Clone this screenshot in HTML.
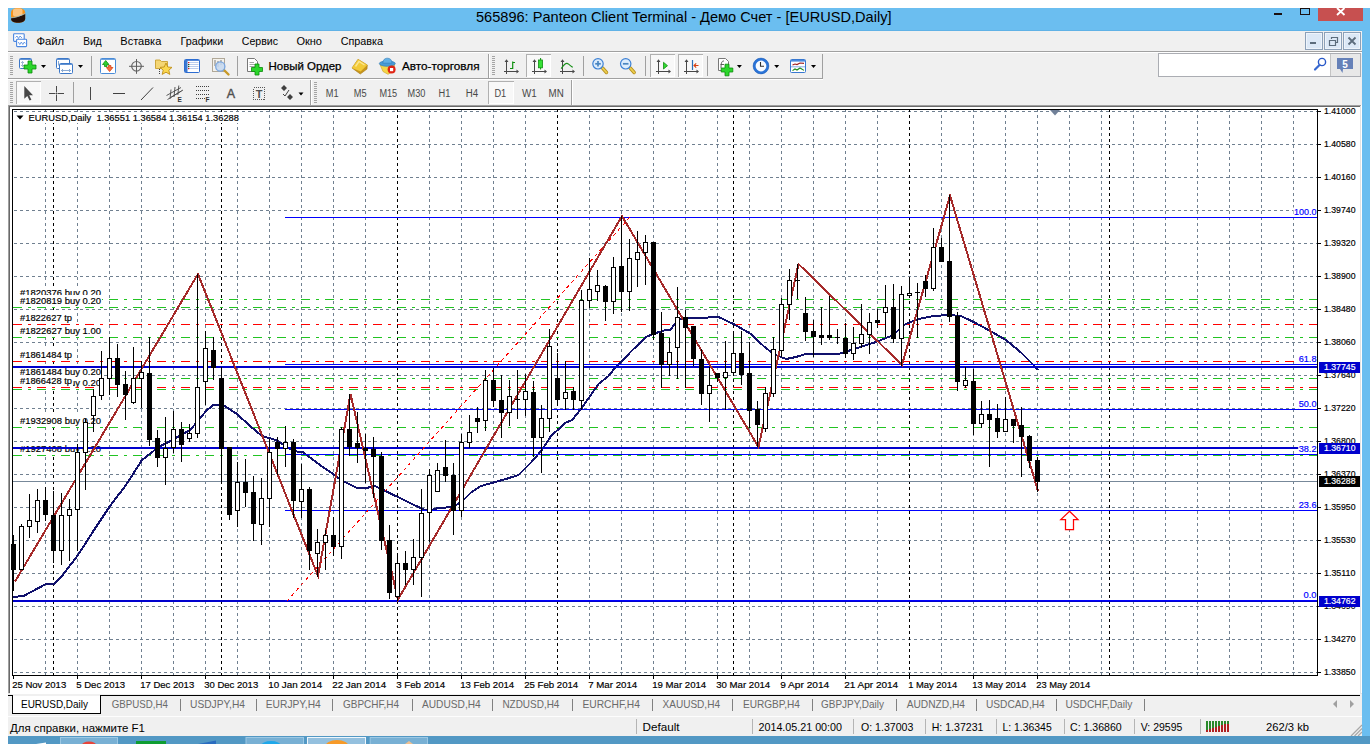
<!DOCTYPE html>
<html lang="ru"><head><meta charset="utf-8"><title>565896: Panteon Client Terminal - Демо Счет - [EURUSD,Daily]</title>
<style>
html,body{margin:0;padding:0;background:#fff;}
body{width:1370px;height:744px;overflow:hidden;position:relative;}
svg{position:absolute;left:0;top:0;display:block;font-family:"Liberation Sans", sans-serif;}
text{white-space:pre;}
</style></head><body>
<svg width="1370" height="744" viewBox="0 0 1370 744">
<rect x="8" y="8" width="1362" height="728" fill="#6bbef0"/>
<rect x="8" y="31" width="1354" height="705" fill="#f0f0f0"/>
<clipPath id="ic"><path d="M11,13 C11,9.5 13.5,8 18,8 C22.5,8 25.2,9.5 25.2,13 V18.5 C25.2,21.5 22,22.7 18,22.7 C14,22.7 11,21.5 11,18.5 Z"/></clipPath>
<g clip-path="url(#ic)"><rect x="10" y="7" width="16" height="16" fill="#f6931c"/><rect x="13" y="8.5" width="9.5" height="8" rx="2" fill="#fdd4a0" opacity="0.75"/><path d="M10,18.3 C15,18.3 20,16.5 26,13.5 V24 H10 Z" fill="#24110a"/><path d="M10,17.9 C15,17.9 20,16.1 26,13.1" stroke="#7cc4ec" stroke-width="0.7" fill="none"/></g>
<rect x="8" y="30" width="1354" height="1" fill="#60b2e6"/>
<text x="476" y="21.6" font-size="15" fill="#000" textLength="415.5" lengthAdjust="spacingAndGlyphs" >565896: Panteon Client Terminal - Демо Счет - [EURUSD,Daily]</text>
<rect x="1274" y="13" width="8" height="2" fill="#1a1010"/>
<rect x="1300.5" y="8.5" width="9" height="6" fill="none" stroke="#1a1010" stroke-width="1"/>
<rect x="1318" y="8" width="45" height="13" fill="#c75050"/>
<path d="M1337,8 L1344.5,15 M1344.5,8 L1337,15" stroke="#fff" stroke-width="1.8" fill="none"/>
<rect x="13.6" y="33.8" width="10.6" height="7.6" rx="0.8" fill="#fff" stroke="#4a86e0" stroke-width="1.1"/><path d="M15.5,37.5 L17,36 L18.5,38.5 L20,36 L22,38" stroke="#4a86e0" fill="none" stroke-width="0.8"/><rect x="16.6" y="39.2" width="10" height="7.4" rx="0.8" fill="#fff" stroke="#4a86e0" stroke-width="1.1"/><path d="M18.3,42 L19.8,44.5 L21.3,42 L22.8,44.5 L24.3,42 L25.3,43.5" stroke="#4a86e0" fill="none" stroke-width="0.8"/>
<text x="36.5" y="44.5" font-size="11" fill="#000" textLength="27.7" lengthAdjust="spacingAndGlyphs" >Файл</text>
<text x="83.2" y="44.5" font-size="11" fill="#000" textLength="18.4" lengthAdjust="spacingAndGlyphs" >Вид</text>
<text x="120.3" y="44.5" font-size="11" fill="#000" textLength="41" lengthAdjust="spacingAndGlyphs" >Вставка</text>
<text x="180.4" y="44.5" font-size="11" fill="#000" textLength="43" lengthAdjust="spacingAndGlyphs" >Графики</text>
<text x="241.8" y="44.5" font-size="11" fill="#000" textLength="36.2" lengthAdjust="spacingAndGlyphs" >Сервис</text>
<text x="296.4" y="44.5" font-size="11" fill="#000" textLength="25.6" lengthAdjust="spacingAndGlyphs" >Окно</text>
<text x="340.7" y="44.5" font-size="11" fill="#000" textLength="42.3" lengthAdjust="spacingAndGlyphs" >Справка</text>
<rect x="1305.5" y="32.5" width="17" height="17" fill="#dce8f6" stroke="#8ca0b8"/>
<rect x="1306.5" y="33.5" width="15" height="15" fill="none" stroke="#eef4fb"/>
<rect x="1324.5" y="32.5" width="17" height="17" fill="#dce8f6" stroke="#8ca0b8"/>
<rect x="1325.5" y="33.5" width="15" height="15" fill="none" stroke="#eef4fb"/>
<rect x="1343.5" y="32.5" width="17" height="17" fill="#dce8f6" stroke="#8ca0b8"/>
<rect x="1344.5" y="33.5" width="15" height="15" fill="none" stroke="#eef4fb"/>
<rect x="1310" y="42" width="6" height="2" fill="#5c6c7c"/>
<path d="M1331.5,39 V37.5 H1337.5 V42.5 H1336 M1329.5,40.5 H1335.5 V45.5 H1329.5 Z" fill="none" stroke="#5c6c7c" stroke-width="1.2"/>
<path d="M1348.5,37.5 L1355.5,44.5 M1355.5,37.5 L1348.5,44.5" stroke="#5c6c7c" stroke-width="1.8"/>
<rect x="8" y="51" width="1354" height="1" fill="#a0a0a0"/>
<rect x="8" y="52" width="1354" height="1" fill="#fff"/>
<rect x="8" y="78" width="815" height="1" fill="#a0a0a0"/>
<rect x="8" y="79" width="815" height="1" fill="#fff"/>
<rect x="488" y="54" width="1" height="24" fill="#a0a0a0"/>
<rect x="489" y="54" width="1" height="24" fill="#fff"/>
<rect x="822" y="54" width="1" height="25" fill="#a0a0a0"/>
<rect x="10" y="56" width="3" height="1" fill="#a4a4a4"/><rect x="10" y="58" width="3" height="1" fill="#a4a4a4"/><rect x="10" y="60" width="3" height="1" fill="#a4a4a4"/><rect x="10" y="62" width="3" height="1" fill="#a4a4a4"/><rect x="10" y="64" width="3" height="1" fill="#a4a4a4"/><rect x="10" y="66" width="3" height="1" fill="#a4a4a4"/><rect x="10" y="68" width="3" height="1" fill="#a4a4a4"/><rect x="10" y="70" width="3" height="1" fill="#a4a4a4"/><rect x="10" y="72" width="3" height="1" fill="#a4a4a4"/><rect x="10" y="74" width="3" height="1" fill="#a4a4a4"/>
<rect x="492" y="56" width="3" height="1" fill="#a4a4a4"/><rect x="492" y="58" width="3" height="1" fill="#a4a4a4"/><rect x="492" y="60" width="3" height="1" fill="#a4a4a4"/><rect x="492" y="62" width="3" height="1" fill="#a4a4a4"/><rect x="492" y="64" width="3" height="1" fill="#a4a4a4"/><rect x="492" y="66" width="3" height="1" fill="#a4a4a4"/><rect x="492" y="68" width="3" height="1" fill="#a4a4a4"/><rect x="492" y="70" width="3" height="1" fill="#a4a4a4"/><rect x="492" y="72" width="3" height="1" fill="#a4a4a4"/><rect x="492" y="74" width="3" height="1" fill="#a4a4a4"/>
<rect x="19.5" y="58.5" width="12" height="10" rx="1" fill="#fff" stroke="#3c78c8"/><rect x="20" y="59" width="11" height="1" fill="#3c78c8" opacity="0.8"/>
<path d="M22.5,61.5 V66.5 M21,63 L22.5,61.5 L24,63 M21,65 L22.5,66.5 L24,65" stroke="#88a4c8" fill="none" stroke-width="0.8"/>
<path d="M28,61 H32 V65 H36 V69 H32 V73 H28 V69 H24 V65 H28 Z" fill="#2bd62b" stroke="#0a8a0a" stroke-width="0.8"/>
<path d="M41.0,65 L46.0,65 L43.5,68 Z" fill="#000"/>
<rect x="56.5" y="58.5" width="13" height="10" rx="1" fill="#fff" stroke="#3c78c8"/><rect x="57" y="59" width="12" height="1" fill="#3c78c8" opacity="0.8"/>
<path d="M58.5,61 V65 M58.5,65.5 H67 M65,64 L67,65.5 L65,67" stroke="#6c94c8" fill="none" stroke-width="0.8"/>
<rect x="59.5" y="63.5" width="13" height="10" rx="1" fill="#fff" stroke="#3c78c8"/><rect x="60" y="64" width="12" height="1" fill="#3c78c8" opacity="0.8"/>
<path d="M61.5,70.5 H70.5 M63,69 L61.5,70.5 L63,72 M69,69 L70.5,70.5 L69,72" stroke="#6c94c8" fill="none" stroke-width="0.8"/>
<path d="M78.0,65 L83.0,65 L80.5,68 Z" fill="#000"/>
<rect x="91" y="56" width="1" height="20" fill="#a0a0a0"/>
<rect x="100.5" y="58.5" width="15" height="15" rx="1" fill="#fff" stroke="#4a8cd8"/><rect x="101" y="59" width="14" height="1" fill="#4a8cd8" opacity="0.8"/>
<path d="M104.5,66.5 V64.5 H102.5 L105.7,60.5 L109,64.5 H107 V66.5 Z" stroke="#109010" fill="#30d030" stroke-width="0.8"/>
<path d="M108.4,65.5 V67.5 H106.4 L109.6,71.5 L112.9,67.5 H110.9 V65.5 Z" stroke="#d84010" fill="#f87040" stroke-width="0.8"/>
<circle cx="136.5" cy="66.3" r="4.8" fill="none" stroke="#686868" stroke-width="1.2"/><path d="M136.5,59 V73.8 M129,66.3 H144" stroke="#606060" stroke-width="1"/>
<path d="M155.5,60 H160 L161.5,61.5 H167.5 V68.5 H155.5 Z" fill="#f4d674" stroke="#c8a030" stroke-width="0.9"/>
<path d="M166,63 L167.8,67 L172,67.4 L168.8,70.2 L169.8,74.4 L166,72.2 L162.2,74.4 L163.2,70.2 L160,67.4 L164.2,67 Z" fill="#fbd850" stroke="#c09018" stroke-width="0.9"/>
<path d="M159.5,69 V74" stroke="#404040" stroke-dasharray="1 1"/>
<rect x="184.5" y="59.5" width="15" height="13" rx="1" fill="#fff" stroke="#2c6cd0"/><rect x="185" y="60" width="14" height="1" fill="#2c6cd0" opacity="0.8"/>
<rect x="185" y="60" width="2.5" height="12" fill="#3c78d0"/>
<path d="M189,62.5 H198.5 M189,64.5 H198.5 M189,66.5 H198.5 M189,68.5 H198.5" stroke="#a8c0e8" stroke-width="0.8"/>
<rect x="188" y="62" width="1.3" height="1.2" fill="#e02020"/><rect x="188" y="64" width="1.3" height="1.2" fill="#205020"/><rect x="188" y="66" width="1.3" height="1.2" fill="#205020"/><rect x="188" y="68" width="1.3" height="1.2" fill="#e02020"/>
<rect x="212.5" y="58.5" width="12" height="13" fill="#f4f2ec" stroke="#b0a898"/>
<path d="M215,60 V66 M218,61 V67 M221,60 V65" stroke="#707070" stroke-width="0.9"/>
<path d="M224,70 L228.5,74.5" stroke="#c89a28" stroke-width="2.4" stroke-linecap="round"/>
<circle cx="220.3" cy="66.5" r="4.6" fill="#c4d8f0" fill-opacity="0.85" stroke="#7aa6e0" stroke-width="1.3"/>
<rect x="237" y="56" width="1" height="20" fill="#a0a0a0"/>
<path d="M247.5,58.5 H254.5 L257.5,61.5 V71.5 H247.5 Z" fill="#fff" stroke="#787878"/>
<path d="M249.5,62.5 H254 M249.5,64.5 H255.5 M249.5,66.5 H255.5" stroke="#909090" stroke-width="0.8"/>
<path d="M255,64.0 H259 V67.5 H262.5 V71.5 H259 V75.0 H255 V71.5 H251.5 V67.5 H255 Z" fill="#2bd62b" stroke="#0a8a0a" stroke-width="0.8"/>
<text x="268.5" y="69.5" font-size="11" fill="#000" textLength="73" lengthAdjust="spacingAndGlyphs" stroke="#000" stroke-width="0.25">Новый Ордер</text>
<path d="M352,68 L358,59.3 L367.3,65 L367,69 L360.3,74 Z" fill="#c8961c" stroke="#a87810" stroke-width="0.6"/>
<path d="M352,68 L358,59.3 L367.3,65 L360.6,71.6 Z" fill="#f2ca38"/>
<path d="M355.5,66.5 L359,61.5 L364.5,65" fill="none" stroke="#fbe690" stroke-width="1.4"/>
<path d="M380,64.5 L394.5,64.5 L394,71 L388,74.3 L383,71.5 Z" fill="#f4d648" stroke="#d0a830" stroke-width="0.7"/>
<ellipse cx="387.3" cy="63.6" rx="8" ry="2.7" fill="#4a9cd6" stroke="#2f7ab8" stroke-width="0.7"/>
<path d="M382.8,63.2 C383,59.5 385,58.2 387.5,58.2 C390,58.2 392,59.8 392,63.2 Z" fill="#62b0e4" stroke="#2f7ab8" stroke-width="0.6"/>
<circle cx="391.6" cy="69.6" r="4" fill="#e02414"/><rect x="390" y="68" width="3.2" height="3.2" fill="#fff"/>
<text x="402" y="69.5" font-size="11" fill="#000" textLength="77.5" lengthAdjust="spacingAndGlyphs" stroke="#000" stroke-width="0.25">Авто-торговля</text>
<path d="M506.5,60.5 V74 M504,71.5 H517.5" stroke="#484848" fill="none" stroke-width="1"/><path d="M504.5,62 L506.5,59.3 L508.5,62 Z M516.5,69.5 L519,71.5 L516.5,73.5 Z" fill="#484848"/>
<path d="M512.7,69 V61.5 M510,68.5 H512.7 M512.7,62.5 H515" stroke="#109010" stroke-width="1.2" fill="none"/>
<rect x="526" y="54" width="25" height="23" fill="#f8f8f8"/><rect x="526" y="76" width="25" height="1" fill="#fff"/><rect x="550" y="54" width="1" height="23" fill="#fff"/><rect x="526" y="54" width="25" height="1" fill="#b0b0b0"/><rect x="526" y="54" width="1" height="23" fill="#b0b0b0"/>
<path d="M534.5,60.5 V74 M532,71.5 H545.5" stroke="#484848" fill="none" stroke-width="1"/><path d="M532.5,62 L534.5,59.3 L536.5,62 Z M544.5,69.5 L547,71.5 L544.5,73.5 Z" fill="#484848"/>
<path d="M540.6,58 V69.5" stroke="#109010" stroke-width="1"/><rect x="538.6" y="60" width="4" height="7.8" fill="#34e034" stroke="#109010" stroke-width="0.8"/>
<path d="M562.5,60.5 V74 M560,71.5 H573.5" stroke="#484848" fill="none" stroke-width="1"/><path d="M560.5,62 L562.5,59.3 L564.5,62 Z M572.5,69.5 L575,71.5 L572.5,73.5 Z" fill="#484848"/>
<path d="M561.2,68.6 C563,66 565,63.2 567,63.4 C569,63.8 571,66.5 572.8,67.3" stroke="#189018" stroke-width="1.1" fill="none"/>
<rect x="583" y="56" width="1" height="20" fill="#a0a0a0"/>
<path d="M602.5,68 L606.5,72.5" stroke="#b89020" stroke-width="3.4" stroke-linecap="round"/><path d="M602.5,68 L606.5,72.5" stroke="#ecd050" stroke-width="1.8" stroke-linecap="round"/><circle cx="598" cy="63.8" r="5.2" fill="#dcecfc" stroke="#3c80d4" stroke-width="1.2"/><path d="M595.2,63.8 H600.8" stroke="#4a86c0" stroke-width="1.7"/><path d="M598,61 V66.6" stroke="#4a86c0" stroke-width="1.7"/>
<path d="M630.2,68 L634.2,72.5" stroke="#b89020" stroke-width="3.4" stroke-linecap="round"/><path d="M630.2,68 L634.2,72.5" stroke="#ecd050" stroke-width="1.8" stroke-linecap="round"/><circle cx="625.7" cy="63.8" r="5.2" fill="#dcecfc" stroke="#3c80d4" stroke-width="1.2"/><path d="M622.9000000000001,63.8 H628.5" stroke="#4a86c0" stroke-width="1.7"/>
<rect x="645" y="56" width="1" height="20" fill="#a0a0a0"/>
<rect x="650" y="54" width="25" height="23" fill="#f8f8f8"/><rect x="650" y="76" width="25" height="1" fill="#fff"/><rect x="674" y="54" width="1" height="23" fill="#fff"/><rect x="650" y="54" width="25" height="1" fill="#b0b0b0"/><rect x="650" y="54" width="1" height="23" fill="#b0b0b0"/>
<path d="M658.5,60.5 V74 M656,71.5 H669.5" stroke="#484848" fill="none" stroke-width="1"/><path d="M656.5,62 L658.5,59.3 L660.5,62 Z M668.5,69.5 L671,71.5 L668.5,73.5 Z" fill="#484848"/>
<path d="M663.5,62.3 L667.5,65.7 L663.5,69 Z" fill="#30d830" stroke="#109010" stroke-width="0.8"/>
<rect x="678" y="54" width="25" height="23" fill="#f8f8f8"/><rect x="678" y="76" width="25" height="1" fill="#fff"/><rect x="702" y="54" width="1" height="23" fill="#fff"/><rect x="678" y="54" width="25" height="1" fill="#b0b0b0"/><rect x="678" y="54" width="1" height="23" fill="#b0b0b0"/>
<path d="M686.5,60.5 V74 M684,71.5 H697.5" stroke="#484848" fill="none" stroke-width="1"/><path d="M684.5,62 L686.5,59.3 L688.5,62 Z M696.5,69.5 L699,71.5 L696.5,73.5 Z" fill="#484848"/>
<path d="M692.5,60 V70" stroke="#2a70b8" stroke-width="1.2"/><path d="M698.5,65.5 H694 M696.2,63.3 L694,65.5 L696.2,67.7" stroke="#d84010" stroke-width="1.1" fill="none"/>
<rect x="707" y="56" width="1" height="20" fill="#a0a0a0"/>
<path d="M718.5,58.5 H725.5 L728.5,61.5 V70.5 H718.5 Z" fill="#fff" stroke="#787878"/>
<path d="M721,68 C721,62 722,61 724,61 M720.5,64.5 H724" stroke="#505050" stroke-width="0.9" fill="none"/>
<path d="M725,64.2 H729 V68 H732.8 V72 H729 V75.8 H725 V72 H721.2 V68 H725 Z" fill="#2bd62b" stroke="#0a8a0a" stroke-width="0.8"/>
<path d="M736.9,65 L741.9,65 L739.4,68 Z" fill="#000"/>
<circle cx="761" cy="66" r="6.7" fill="#f8fbff" stroke="#2a74d8" stroke-width="2.6"/><circle cx="761" cy="66" r="7.9" fill="none" stroke="#1c58b0" stroke-width="0.5"/><path d="M760.5,62 V66.3 H764" stroke="#303030" stroke-width="1.1" fill="none"/>
<path d="M774.2,65 L779.2,65 L776.7,68 Z" fill="#000"/>
<rect x="790.5" y="59.5" width="15" height="13" rx="1" fill="#fff" stroke="#3878d0"/><rect x="791" y="60" width="14" height="1" fill="#3878d0" opacity="0.8"/>
<rect x="791" y="60" width="14" height="1.6" fill="#4a8ce0"/>
<path d="M792.5,65 L795,64 L797,64.6 L800,63 L804,63.4" stroke="#a02020" fill="none" stroke-width="1.1"/>
<path d="M792.5,70.6 L795,69 L797,70 L800,68 L804,70.4" stroke="#1a8a1a" fill="none" stroke-width="1.1"/>
<path d="M791,66.8 H805" stroke="#6898dc" stroke-width="0.8"/>
<path d="M811.0,65 L816.0,65 L813.5,68 Z" fill="#000"/>
<rect x="1158.5" y="53.5" width="202" height="23" fill="#fff" stroke="#abadb3"/>
<rect x="1331" y="54" width="29" height="22" fill="#e8e8e8"/>
<rect x="1330" y="54" width="1" height="22" fill="#c4c4c4"/>
<circle cx="1322" cy="62" r="3.6" fill="#fff" stroke="#2858c8" stroke-width="1.4"/><path d="M1319.5,65 L1315,69.5" stroke="#3868d0" stroke-width="2.2" stroke-linecap="round"/>
<path d="M1337,58 H1353 V69 H1343 L1342.5,73 L1340,69 H1337 Z" fill="#6681b8"/>
<text x="1345" y="67.5" font-size="10" fill="#fff" text-anchor="middle" font-weight="bold" >5</text>
<rect x="310" y="80" width="1" height="25" fill="#a0a0a0"/>
<rect x="311" y="80" width="1" height="25" fill="#fff"/>
<rect x="571" y="80" width="1" height="25" fill="#a0a0a0"/>
<rect x="572" y="80" width="1" height="25" fill="#fff"/>
<rect x="10" y="82" width="3" height="1" fill="#a4a4a4"/><rect x="10" y="84" width="3" height="1" fill="#a4a4a4"/><rect x="10" y="86" width="3" height="1" fill="#a4a4a4"/><rect x="10" y="88" width="3" height="1" fill="#a4a4a4"/><rect x="10" y="90" width="3" height="1" fill="#a4a4a4"/><rect x="10" y="92" width="3" height="1" fill="#a4a4a4"/><rect x="10" y="94" width="3" height="1" fill="#a4a4a4"/><rect x="10" y="96" width="3" height="1" fill="#a4a4a4"/><rect x="10" y="98" width="3" height="1" fill="#a4a4a4"/><rect x="10" y="100" width="3" height="1" fill="#a4a4a4"/><rect x="10" y="102" width="3" height="1" fill="#a4a4a4"/>
<rect x="314" y="82" width="3" height="1" fill="#a4a4a4"/><rect x="314" y="84" width="3" height="1" fill="#a4a4a4"/><rect x="314" y="86" width="3" height="1" fill="#a4a4a4"/><rect x="314" y="88" width="3" height="1" fill="#a4a4a4"/><rect x="314" y="90" width="3" height="1" fill="#a4a4a4"/><rect x="314" y="92" width="3" height="1" fill="#a4a4a4"/><rect x="314" y="94" width="3" height="1" fill="#a4a4a4"/><rect x="314" y="96" width="3" height="1" fill="#a4a4a4"/><rect x="314" y="98" width="3" height="1" fill="#a4a4a4"/><rect x="314" y="100" width="3" height="1" fill="#a4a4a4"/><rect x="314" y="102" width="3" height="1" fill="#a4a4a4"/>
<rect x="16" y="81" width="25" height="23" fill="#f8f8f8"/><rect x="16" y="103" width="25" height="1" fill="#fff"/><rect x="40" y="81" width="1" height="23" fill="#fff"/><rect x="16" y="81" width="25" height="1" fill="#b0b0b0"/><rect x="16" y="81" width="1" height="23" fill="#b0b0b0"/>
<path d="M24.3,86 V98.8 L27.3,96 L29.6,100.6 L31.4,99.7 L29.2,95.3 H33 Z" fill="#484848"/>
<path d="M56.5,86 V101 M49,93.5 H64" stroke="#484848" stroke-width="1"/><rect x="55.5" y="92.5" width="2" height="2" fill="#f0f0f0"/><rect x="56" y="93" width="1" height="1" fill="#484848"/>
<rect x="73" y="82" width="1" height="21" fill="#a0a0a0"/>
<path d="M90.5,87 V100" stroke="#484848" stroke-width="1"/>
<path d="M113,93.5 H125" stroke="#404040" stroke-width="1"/>
<path d="M141,100 L153,87.5" stroke="#404040" stroke-width="1"/>
<path d="M166.5,95.5 L181,87.5 M167.5,99.5 L181.5,91 M170.5,97.5 L183,90 M171,89.5 L170,99 M175,87 L174,97 M178.8,85.5 L177.8,95" stroke="#484848" stroke-width="0.9"/>
<text x="177.5" y="102" font-size="6.5" fill="#303030" font-weight="bold" >E</text>
<path d="M196,86.5 H209 M196,90.5 H209 M196,94.5 H209 M196,98.5 H205" stroke="#404040" stroke-width="1" stroke-dasharray="1 1"/>
<text x="205.5" y="102" font-size="6.5" fill="#303030" font-weight="bold" >F</text>
<text x="230.8" y="98" font-size="12.5" fill="#505050" text-anchor="middle" stroke="#505050" stroke-width="0.4">A</text>
<rect x="253.5" y="87.5" width="11" height="12" fill="none" stroke="#585858" stroke-dasharray="1 1" shape-rendering="crispEdges"/>
<text x="259" y="97.8" font-size="11" fill="#505050" text-anchor="middle" font-weight="bold" >T</text>
<path d="M281,88 L284,85 L287,88 L284,91 Z M287,97 L290,94 L293,97 L290,100 Z" fill="#404040"/><path d="M283,94 L285,96 L289,90" stroke="#404040" fill="none" stroke-width="1"/>
<path d="M298.5,92.5 L303.5,92.5 L301,95.5 Z" fill="#000"/>
<rect x="488" y="81" width="26" height="23" fill="#f8f8f8"/><rect x="488" y="103" width="26" height="1" fill="#fff"/><rect x="513" y="81" width="1" height="23" fill="#fff"/><rect x="488" y="81" width="26" height="1" fill="#b0b0b0"/><rect x="488" y="81" width="1" height="23" fill="#b0b0b0"/>
<text x="325.8" y="96.8" font-size="10" fill="#484848" textLength="12.8" lengthAdjust="spacingAndGlyphs" >M1</text>
<text x="353.8" y="96.8" font-size="10" fill="#484848" textLength="12.8" lengthAdjust="spacingAndGlyphs" >M5</text>
<text x="379.40000000000003" y="96.8" font-size="10" fill="#484848" textLength="17.8" lengthAdjust="spacingAndGlyphs" >M15</text>
<text x="407.6" y="96.8" font-size="10" fill="#484848" textLength="17.8" lengthAdjust="spacingAndGlyphs" >M30</text>
<text x="438.6" y="96.8" font-size="10" fill="#484848" textLength="11.8" lengthAdjust="spacingAndGlyphs" >H1</text>
<text x="465.8" y="96.8" font-size="10" fill="#484848" textLength="12.4" lengthAdjust="spacingAndGlyphs" >H4</text>
<text x="494.40000000000003" y="96.8" font-size="10" fill="#484848" textLength="11.8" lengthAdjust="spacingAndGlyphs" >D1</text>
<text x="522.0" y="96.8" font-size="10" fill="#484848" textLength="14.8" lengthAdjust="spacingAndGlyphs" >W1</text>
<text x="548.6" y="96.8" font-size="10" fill="#484848" textLength="15.2" lengthAdjust="spacingAndGlyphs" >MN</text>
<rect x="8" y="105" width="1354" height="1" fill="#a0a0a0"/>
<rect x="9" y="106" width="1352" height="1" fill="#696969"/>
<rect x="8" y="105" width="1" height="588" fill="#a0a0a0"/>
<rect x="8" y="695" width="1" height="20" fill="#a0a0a0"/>
<rect x="9" y="106" width="1" height="587" fill="#696969"/>
<rect x="9" y="695" width="1" height="20" fill="#696969"/>
<rect x="1360" y="106" width="1" height="609" fill="#e3e3e3"/>
<rect x="1361" y="105" width="1" height="611" fill="#fff"/>
<rect x="8" y="693" width="1354" height="22" fill="#f0f0f0"/>
<rect x="8" y="693" width="1354" height="1" fill="#e3e3e3"/>
<rect x="8" y="695" width="5" height="1" fill="#000"/>
<rect x="100" y="695" width="1260" height="1" fill="#000"/>
<rect x="12" y="696" width="89" height="18" fill="#fff"/>
<rect x="12" y="695" width="1" height="19" fill="#000"/>
<rect x="100" y="695" width="1" height="19" fill="#000"/>
<rect x="12" y="713" width="89" height="1" fill="#000"/>
<text x="21" y="708" font-size="11" fill="#000" textLength="67" lengthAdjust="spacingAndGlyphs" >EURUSD,Daily</text>
<text x="111.7" y="708" font-size="11" fill="#6a6a6a" textLength="56.1" lengthAdjust="spacingAndGlyphs" >GBPUSD,H4</text>
<rect x="180" y="699" width="1" height="12" fill="#808080"/>
<text x="190" y="708" font-size="11" fill="#6a6a6a" textLength="55" lengthAdjust="spacingAndGlyphs" >USDJPY,H4</text>
<rect x="256" y="699" width="1" height="12" fill="#808080"/>
<text x="265.8" y="708" font-size="11" fill="#6a6a6a" textLength="55.0" lengthAdjust="spacingAndGlyphs" >EURJPY,H4</text>
<rect x="332" y="699" width="1" height="12" fill="#808080"/>
<text x="343" y="708" font-size="11" fill="#6a6a6a" textLength="56" lengthAdjust="spacingAndGlyphs" >GBPCHF,H4</text>
<rect x="412" y="699" width="1" height="12" fill="#808080"/>
<text x="422" y="708" font-size="11" fill="#6a6a6a" textLength="58.7" lengthAdjust="spacingAndGlyphs" >AUDUSD,H4</text>
<rect x="492" y="699" width="1" height="12" fill="#808080"/>
<text x="502.4" y="708" font-size="11" fill="#6a6a6a" textLength="57.0" lengthAdjust="spacingAndGlyphs" >NZDUSD,H4</text>
<rect x="572" y="699" width="1" height="12" fill="#808080"/>
<text x="582.4" y="708" font-size="11" fill="#6a6a6a" textLength="57.6" lengthAdjust="spacingAndGlyphs" >EURCHF,H4</text>
<rect x="652" y="699" width="1" height="12" fill="#808080"/>
<text x="662.5" y="708" font-size="11" fill="#6a6a6a" textLength="57.5" lengthAdjust="spacingAndGlyphs" >XAUUSD,H4</text>
<rect x="732" y="699" width="1" height="12" fill="#808080"/>
<text x="742.9" y="708" font-size="11" fill="#6a6a6a" textLength="57.1" lengthAdjust="spacingAndGlyphs" >EURGBP,H4</text>
<rect x="812" y="699" width="1" height="12" fill="#808080"/>
<text x="821" y="708" font-size="11" fill="#6a6a6a" textLength="63" lengthAdjust="spacingAndGlyphs" >GBPJPY,Daily</text>
<rect x="896" y="699" width="1" height="12" fill="#808080"/>
<text x="906.7" y="708" font-size="11" fill="#6a6a6a" textLength="58.3" lengthAdjust="spacingAndGlyphs" >AUDNZD,H4</text>
<rect x="976" y="699" width="1" height="12" fill="#808080"/>
<text x="986" y="708" font-size="11" fill="#6a6a6a" textLength="58.7" lengthAdjust="spacingAndGlyphs" >USDCAD,H4</text>
<rect x="1056" y="699" width="1" height="12" fill="#808080"/>
<text x="1065.4" y="708" font-size="11" fill="#6a6a6a" textLength="67.0" lengthAdjust="spacingAndGlyphs" >USDCHF,Daily</text>
<rect x="1144" y="699" width="1" height="12" fill="#808080"/>
<path d="M1337,700 V708 L1333,704 Z M1350,700 V708 L1354,704 Z" fill="#a0a0a0"/>
<rect x="8" y="715" width="1354" height="1" fill="#f0f0f0"/>
<rect x="8" y="716" width="1354" height="1" fill="#fdfdfd"/>
<text x="10" y="731.5" font-size="11.5" fill="#000" textLength="135" lengthAdjust="spacingAndGlyphs" >Для справки, нажмите F1</text>
<text x="642.5" y="730.5" font-size="11" fill="#000" textLength="37" lengthAdjust="spacingAndGlyphs" >Default</text>
<text x="758.5" y="730.5" font-size="11" fill="#000" textLength="83.5" lengthAdjust="spacingAndGlyphs" >2014.05.21 00:00</text>
<text x="861" y="730.5" font-size="11" fill="#000" textLength="52.3" lengthAdjust="spacingAndGlyphs" >O: 1.37003</text>
<text x="931.7" y="730.5" font-size="11" fill="#000" textLength="51.7" lengthAdjust="spacingAndGlyphs" >H: 1.37231</text>
<text x="1002.4" y="730.5" font-size="11" fill="#000" textLength="49.3" lengthAdjust="spacingAndGlyphs" >L: 1.36345</text>
<text x="1070" y="730.5" font-size="11" fill="#000" textLength="51.7" lengthAdjust="spacingAndGlyphs" >C: 1.36860</text>
<text x="1140.7" y="730.5" font-size="11" fill="#000" textLength="41.7" lengthAdjust="spacingAndGlyphs" >V: 29595</text>
<text x="1266" y="730.5" font-size="11" fill="#000" textLength="43" lengthAdjust="spacingAndGlyphs" >262/3 kb</text>
<rect x="636" y="719" width="1" height="15" fill="#b4b4b4"/>
<rect x="752" y="719" width="1" height="15" fill="#b4b4b4"/>
<rect x="853" y="719" width="1" height="15" fill="#b4b4b4"/>
<rect x="925" y="719" width="1" height="15" fill="#b4b4b4"/>
<rect x="996" y="719" width="1" height="15" fill="#b4b4b4"/>
<rect x="1064" y="719" width="1" height="15" fill="#b4b4b4"/>
<rect x="1134" y="719" width="1" height="15" fill="#b4b4b4"/>
<rect x="1200" y="719" width="1" height="15" fill="#b4b4b4"/>
<rect x="1206" y="721" width="2" height="9" fill="#2a8a2a"/>
<rect x="1206" y="730" width="2" height="2" fill="#b02020"/>
<rect x="1209" y="721" width="2" height="8" fill="#2a8a2a"/>
<rect x="1209" y="729" width="2" height="3" fill="#b02020"/>
<rect x="1212" y="721" width="2" height="7" fill="#2a8a2a"/>
<rect x="1212" y="728" width="2" height="4" fill="#b02020"/>
<rect x="1215" y="721" width="2" height="6" fill="#2a8a2a"/>
<rect x="1215" y="727" width="2" height="5" fill="#b02020"/>
<rect x="1218" y="721" width="2" height="5" fill="#2a8a2a"/>
<rect x="1218" y="726" width="2" height="6" fill="#b02020"/>
<rect x="1221" y="721" width="2" height="4" fill="#2a8a2a"/>
<rect x="1221" y="725" width="2" height="7" fill="#b02020"/>
<rect x="1224" y="721" width="2" height="3" fill="#2a8a2a"/>
<rect x="1224" y="724" width="2" height="8" fill="#b02020"/>
<rect x="1227" y="721" width="2" height="3" fill="#2a8a2a"/>
<rect x="1227" y="724" width="2" height="8" fill="#b02020"/>
<path d="M1351,736 L1362,725 M1354.5,736 L1362,728.5 M1358,736 L1362,732" stroke="#a8a8a8" stroke-width="1.2"/>
<rect x="8" y="736" width="1362" height="8" fill="#5298c4"/>
<rect x="60.5" y="737.5" width="57" height="10" fill="#78b0d4" stroke="#9cc8e4"/>
<rect x="246.0" y="737.5" width="57.5" height="10" fill="#78b0d4" stroke="#9cc8e4"/>
<rect x="307.5" y="737.5" width="58" height="10" fill="#94c0de" stroke="#eef6fc"/>
<rect x="370.2" y="737.5" width="57.30000000000001" height="10" fill="#78b0d4" stroke="#9cc8e4"/>
<path d="M36,744 L46,742.5 V744 Z" fill="#fff"/>
<ellipse cx="89" cy="746" rx="7.5" ry="4.5" fill="#e8443a"/>
<rect x="136" y="741" width="30" height="4" fill="#0f9d32"/>
<path d="M198,744 L216,740.5 V744 Z" fill="#2a6cc0"/>
<ellipse cx="271" cy="746" rx="10" ry="5" fill="#1ea8ea"/>
<ellipse cx="337" cy="747" rx="12" ry="7" fill="#f79a28"/>
<path d="M405,744 L409,741 L413,744 Z" fill="#f0c090"/>
<rect x="10" y="107" width="1350" height="587" fill="#fff"/>
<g shape-rendering="crispEdges">
<line x1="14" y1="111.5" x2="1317" y2="111.5" stroke="#708090" stroke-dasharray="3 3"/>
<line x1="14" y1="144.5" x2="1317" y2="144.5" stroke="#708090" stroke-dasharray="3 3"/>
<line x1="14" y1="177.5" x2="1317" y2="177.5" stroke="#708090" stroke-dasharray="3 3"/>
<line x1="14" y1="210.5" x2="1317" y2="210.5" stroke="#708090" stroke-dasharray="3 3"/>
<line x1="14" y1="243.5" x2="1317" y2="243.5" stroke="#708090" stroke-dasharray="3 3"/>
<line x1="14" y1="276.5" x2="1317" y2="276.5" stroke="#708090" stroke-dasharray="3 3"/>
<line x1="14" y1="309.5" x2="1317" y2="309.5" stroke="#708090" stroke-dasharray="3 3"/>
<line x1="14" y1="342.5" x2="1317" y2="342.5" stroke="#708090" stroke-dasharray="3 3"/>
<line x1="14" y1="375.5" x2="1317" y2="375.5" stroke="#708090" stroke-dasharray="3 3"/>
<line x1="14" y1="408.5" x2="1317" y2="408.5" stroke="#708090" stroke-dasharray="3 3"/>
<line x1="14" y1="441.5" x2="1317" y2="441.5" stroke="#708090" stroke-dasharray="3 3"/>
<line x1="14" y1="474.5" x2="1317" y2="474.5" stroke="#708090" stroke-dasharray="3 3"/>
<line x1="14" y1="507.5" x2="1317" y2="507.5" stroke="#708090" stroke-dasharray="3 3"/>
<line x1="14" y1="540.5" x2="1317" y2="540.5" stroke="#708090" stroke-dasharray="3 3"/>
<line x1="14" y1="573.5" x2="1317" y2="573.5" stroke="#708090" stroke-dasharray="3 3"/>
<line x1="14" y1="606.5" x2="1317" y2="606.5" stroke="#708090" stroke-dasharray="3 3"/>
<line x1="14" y1="639.5" x2="1317" y2="639.5" stroke="#708090" stroke-dasharray="3 3"/>
<line x1="14" y1="672.5" x2="1317" y2="672.5" stroke="#708090" stroke-dasharray="3 3"/>
<line x1="45.5" y1="109" x2="45.5" y2="675" stroke="#708090" stroke-dasharray="3 3"/>
<line x1="77.5" y1="109" x2="77.5" y2="675" stroke="#708090" stroke-dasharray="3 3"/>
<line x1="109.5" y1="109" x2="109.5" y2="675" stroke="#708090" stroke-dasharray="3 3"/>
<line x1="141.5" y1="109" x2="141.5" y2="675" stroke="#708090" stroke-dasharray="3 3"/>
<line x1="173.5" y1="109" x2="173.5" y2="675" stroke="#708090" stroke-dasharray="3 3"/>
<line x1="205.5" y1="109" x2="205.5" y2="675" stroke="#708090" stroke-dasharray="3 3"/>
<line x1="237.5" y1="109" x2="237.5" y2="675" stroke="#708090" stroke-dasharray="3 3"/>
<line x1="269.5" y1="109" x2="269.5" y2="675" stroke="#708090" stroke-dasharray="3 3"/>
<line x1="301.5" y1="109" x2="301.5" y2="675" stroke="#708090" stroke-dasharray="3 3"/>
<line x1="333.5" y1="109" x2="333.5" y2="675" stroke="#708090" stroke-dasharray="3 3"/>
<line x1="365.5" y1="109" x2="365.5" y2="675" stroke="#708090" stroke-dasharray="3 3"/>
<line x1="429.5" y1="109" x2="429.5" y2="675" stroke="#708090" stroke-dasharray="3 3"/>
<line x1="461.5" y1="109" x2="461.5" y2="675" stroke="#708090" stroke-dasharray="3 3"/>
<line x1="493.5" y1="109" x2="493.5" y2="675" stroke="#708090" stroke-dasharray="3 3"/>
<line x1="525.5" y1="109" x2="525.5" y2="675" stroke="#708090" stroke-dasharray="3 3"/>
<line x1="589.5" y1="109" x2="589.5" y2="675" stroke="#708090" stroke-dasharray="3 3"/>
<line x1="621.5" y1="109" x2="621.5" y2="675" stroke="#708090" stroke-dasharray="3 3"/>
<line x1="653.5" y1="109" x2="653.5" y2="675" stroke="#708090" stroke-dasharray="3 3"/>
<line x1="685.5" y1="109" x2="685.5" y2="675" stroke="#708090" stroke-dasharray="3 3"/>
<line x1="717.5" y1="109" x2="717.5" y2="675" stroke="#708090" stroke-dasharray="3 3"/>
<line x1="749.5" y1="109" x2="749.5" y2="675" stroke="#708090" stroke-dasharray="3 3"/>
<line x1="781.5" y1="109" x2="781.5" y2="675" stroke="#708090" stroke-dasharray="3 3"/>
<line x1="813.5" y1="109" x2="813.5" y2="675" stroke="#708090" stroke-dasharray="3 3"/>
<line x1="845.5" y1="109" x2="845.5" y2="675" stroke="#708090" stroke-dasharray="3 3"/>
<line x1="877.5" y1="109" x2="877.5" y2="675" stroke="#708090" stroke-dasharray="3 3"/>
<line x1="941.5" y1="109" x2="941.5" y2="675" stroke="#708090" stroke-dasharray="3 3"/>
<line x1="973.5" y1="109" x2="973.5" y2="675" stroke="#708090" stroke-dasharray="3 3"/>
<line x1="1005.5" y1="109" x2="1005.5" y2="675" stroke="#708090" stroke-dasharray="3 3"/>
<line x1="1037.5" y1="109" x2="1037.5" y2="675" stroke="#708090" stroke-dasharray="3 3"/>
<line x1="1069.5" y1="109" x2="1069.5" y2="675" stroke="#708090" stroke-dasharray="3 3"/>
<line x1="1101.5" y1="109" x2="1101.5" y2="675" stroke="#708090" stroke-dasharray="3 3"/>
<line x1="1133.5" y1="109" x2="1133.5" y2="675" stroke="#708090" stroke-dasharray="3 3"/>
<line x1="1165.5" y1="109" x2="1165.5" y2="675" stroke="#708090" stroke-dasharray="3 3"/>
<line x1="1197.5" y1="109" x2="1197.5" y2="675" stroke="#708090" stroke-dasharray="3 3"/>
<line x1="1229.5" y1="109" x2="1229.5" y2="675" stroke="#708090" stroke-dasharray="3 3"/>
<line x1="1261.5" y1="109" x2="1261.5" y2="675" stroke="#708090" stroke-dasharray="3 3"/>
<line x1="1293.5" y1="109" x2="1293.5" y2="675" stroke="#708090" stroke-dasharray="3 3"/>
<line x1="53.5" y1="109" x2="53.5" y2="675" stroke="#000" stroke-dasharray="3 3"/>
<line x1="221.5" y1="109" x2="221.5" y2="675" stroke="#000" stroke-dasharray="3 3"/>
<line x1="397.5" y1="109" x2="397.5" y2="675" stroke="#000" stroke-dasharray="3 3"/>
<line x1="557.5" y1="109" x2="557.5" y2="675" stroke="#000" stroke-dasharray="3 3"/>
<line x1="733.5" y1="109" x2="733.5" y2="675" stroke="#000" stroke-dasharray="3 3"/>
<line x1="909.5" y1="109" x2="909.5" y2="675" stroke="#000" stroke-dasharray="3 3"/>
<line x1="1109.5" y1="109" x2="1109.5" y2="675" stroke="#000" stroke-dasharray="3 3"/>
</g>
<line x1="13" y1="299.5" x2="1317" y2="299.5" stroke="#22c422" stroke-dasharray="9 6 3 6" shape-rendering="crispEdges"/>
<rect x="13" y="287" width="89" height="11" fill="#fff"/>
<text x="20" y="296.2" font-size="9.5" fill="#000" textLength="81" lengthAdjust="spacingAndGlyphs" stroke="#000" stroke-width="0.18">#1820376 buy 0.20</text>
<line x1="13" y1="307.5" x2="1317" y2="307.5" stroke="#22c422" stroke-dasharray="9 6 3 6" shape-rendering="crispEdges"/>
<rect x="13" y="295" width="89" height="11" fill="#fff"/>
<text x="20" y="304.2" font-size="9.5" fill="#000" textLength="81" lengthAdjust="spacingAndGlyphs" stroke="#000" stroke-width="0.18">#1820819 buy 0.20</text>
<line x1="13" y1="337.5" x2="1317" y2="337.5" stroke="#22c422" stroke-dasharray="9 6 3 6" shape-rendering="crispEdges"/>
<rect x="13" y="325" width="89" height="11" fill="#fff"/>
<text x="20" y="334.2" font-size="9.5" fill="#000" textLength="81" lengthAdjust="spacingAndGlyphs" stroke="#000" stroke-width="0.18">#1822627 buy 1.00</text>
<line x1="13" y1="324.5" x2="1317" y2="324.5" stroke="#ff0000" stroke-dasharray="9 6 3 6" shape-rendering="crispEdges"/>
<rect x="13" y="312" width="60" height="11" fill="#fff"/>
<text x="20" y="321.2" font-size="9.5" fill="#000" textLength="52" lengthAdjust="spacingAndGlyphs" stroke="#000" stroke-width="0.18">#1822627 tp</text>
<line x1="13" y1="378.5" x2="1317" y2="378.5" stroke="#22c422" stroke-dasharray="9 6 3 6" shape-rendering="crispEdges"/>
<rect x="13" y="366" width="89" height="11" fill="#fff"/>
<text x="20" y="375.2" font-size="9.5" fill="#000" textLength="81" lengthAdjust="spacingAndGlyphs" stroke="#000" stroke-width="0.18">#1861484 buy 0.20</text>
<line x1="13" y1="361.5" x2="1317" y2="361.5" stroke="#ff0000" stroke-dasharray="9 6 3 6" shape-rendering="crispEdges"/>
<rect x="13" y="349" width="60" height="11" fill="#fff"/>
<text x="20" y="358.2" font-size="9.5" fill="#000" textLength="52" lengthAdjust="spacingAndGlyphs" stroke="#000" stroke-width="0.18">#1861484 tp</text>
<line x1="13" y1="389.5" x2="1317" y2="389.5" stroke="#22c422" stroke-dasharray="9 6 3 6" shape-rendering="crispEdges"/>
<rect x="13" y="377" width="89" height="11" fill="#fff"/>
<text x="20" y="386.2" font-size="9.5" fill="#000" textLength="81" lengthAdjust="spacingAndGlyphs" stroke="#000" stroke-width="0.18">#1866428 buy 0.20</text>
<line x1="13" y1="387.5" x2="1317" y2="387.5" stroke="#ff0000" stroke-dasharray="9 6 3 6" shape-rendering="crispEdges"/>
<rect x="13" y="375" width="60" height="11" fill="#fff"/>
<text x="20" y="384.2" font-size="9.5" fill="#000" textLength="52" lengthAdjust="spacingAndGlyphs" stroke="#000" stroke-width="0.18">#1866428 tp</text>
<line x1="13" y1="455.5" x2="1317" y2="455.5" stroke="#22c422" stroke-dasharray="9 6 3 6" shape-rendering="crispEdges"/>
<rect x="13" y="443" width="89" height="11" fill="#fff"/>
<text x="20" y="452.2" font-size="9.5" fill="#000" textLength="81" lengthAdjust="spacingAndGlyphs" stroke="#000" stroke-width="0.18">#1927408 buy 0.20</text>
<line x1="13" y1="427.5" x2="1317" y2="427.5" stroke="#22c422" stroke-dasharray="9 6 3 6" shape-rendering="crispEdges"/>
<rect x="13" y="415" width="89" height="11" fill="#fff"/>
<text x="20" y="424.2" font-size="9.5" fill="#000" textLength="81" lengthAdjust="spacingAndGlyphs" stroke="#000" stroke-width="0.18">#1932908 buy 0.20</text>
<rect x="13" y="481" width="1304" height="1" fill="#778899"/>
<polyline points="13,597 23.5,596 46,584 54,584 62,576 78,555 94,530 110,506 126,485 142,460 158,447.5 174,439 190,430 198,421 206,411 214,404.5 222,404.5 224.5,406 237,414 249.5,425.5 262,436 276,440 293.5,451 303.5,452.5 318.5,464 331,472.5 341,480 356,487.5 368.5,487.5 374,485.5 388.5,492.5 406,501 423.5,509.5 431,510 438.5,508 453.5,507 463.5,500 471,492.5 481,486 493.5,482.5 506,479 518.5,475 531,462.5 542,450 551,436 566,422.5 572,420 581,409 598.5,384 608.5,376 616,366.5 622,361 631,351.5 646,337 654,333.5 666,330 670,330 678.5,320 686,318 708.5,317.5 718.5,317 733.5,324 751,334 763.5,346 773.5,354 786,359 796,357 806,354 821,354 838.5,354 851,350 863.5,346 876,342 893.5,335 903.5,325 918.5,319 933.5,316 948.5,315 961,316 973.5,322 988.5,330 1006,340 1021,352.5 1033.5,365 1038,370" fill="none" stroke="#10106c" stroke-width="2" stroke-linejoin="round" shape-rendering="crispEdges"/>
<rect x="13" y="366" width="1304" height="2" fill="#0000cd"/>
<rect x="13" y="447" width="1304" height="2" fill="#0000cd"/>
<rect x="13" y="600" width="1304" height="2" fill="#0000cd"/>
<rect x="285" y="217" width="1032" height="1" fill="#0000ff"/>
<rect x="285" y="364" width="1032" height="1" fill="#0000ff"/>
<rect x="285" y="409" width="1032" height="1" fill="#0000ff"/>
<rect x="285" y="454" width="1032" height="1" fill="#0000ff"/>
<rect x="285" y="510" width="1032" height="1" fill="#0000ff"/>
<rect x="285" y="600" width="1032" height="1" fill="#0000ff"/>
<line x1="287" y1="601" x2="630" y2="217" stroke="#ff0000" stroke-width="1" stroke-dasharray="3.5 3.5" shape-rendering="crispEdges"/>
<rect x="1293.5" y="207" width="23.5" height="10" fill="#fff"/>
<text x="1294.0" y="215" font-size="9.5" fill="#0000ff" textLength="22.5" lengthAdjust="spacingAndGlyphs" stroke="#0000ff" stroke-width="0.18">100.0</text>
<rect x="1298.2" y="354" width="18.8" height="10" fill="#fff"/>
<text x="1298.7" y="362" font-size="9.5" fill="#0000ff" textLength="17.8" lengthAdjust="spacingAndGlyphs" stroke="#0000ff" stroke-width="0.18">61.8</text>
<rect x="1298.2" y="399" width="18.8" height="10" fill="#fff"/>
<text x="1298.7" y="407" font-size="9.5" fill="#0000ff" textLength="17.8" lengthAdjust="spacingAndGlyphs" stroke="#0000ff" stroke-width="0.18">50.0</text>
<rect x="1298.2" y="444" width="18.8" height="10" fill="#fff"/>
<text x="1298.7" y="452" font-size="9.5" fill="#0000ff" textLength="17.8" lengthAdjust="spacingAndGlyphs" stroke="#0000ff" stroke-width="0.18">38.2</text>
<rect x="1298.2" y="500" width="18.8" height="10" fill="#fff"/>
<text x="1298.7" y="508" font-size="9.5" fill="#0000ff" textLength="17.8" lengthAdjust="spacingAndGlyphs" stroke="#0000ff" stroke-width="0.18">23.6</text>
<rect x="1303" y="590" width="14" height="10" fill="#fff"/>
<text x="1303.5" y="598" font-size="9.5" fill="#0000ff" textLength="13" lengthAdjust="spacingAndGlyphs" stroke="#0000ff" stroke-width="0.18">0.0</text>
<polyline points="15,581.5 198,274 318,576 350.5,394 398,599.5 622,216 758.5,447 798.5,264 902,365 950,195.5 1038,491" fill="none" stroke="#a52a2a" stroke-width="2" stroke-linejoin="miter" shape-rendering="crispEdges"/>
<g shape-rendering="crispEdges">
<rect x="13" y="535" width="1" height="56" fill="#000"/>
<rect x="11" y="544" width="5" height="26" fill="#000"/>
<rect x="21" y="524" width="1" height="46" fill="#000"/>
<rect x="19" y="526" width="5" height="44" fill="#000"/>
<rect x="20" y="527" width="3" height="42" fill="#fff"/>
<rect x="29" y="494" width="1" height="44" fill="#000"/>
<rect x="27" y="520" width="5" height="7" fill="#000"/>
<rect x="28" y="521" width="3" height="5" fill="#fff"/>
<rect x="37" y="489" width="1" height="44" fill="#000"/>
<rect x="35" y="500" width="5" height="22" fill="#000"/>
<rect x="36" y="501" width="3" height="20" fill="#fff"/>
<rect x="45" y="487" width="1" height="34" fill="#000"/>
<rect x="43" y="500" width="5" height="15" fill="#000"/>
<rect x="53" y="491" width="1" height="72" fill="#000"/>
<rect x="51" y="515" width="5" height="36" fill="#000"/>
<rect x="61" y="493" width="1" height="72" fill="#000"/>
<rect x="59" y="515" width="5" height="36" fill="#000"/>
<rect x="60" y="516" width="3" height="34" fill="#fff"/>
<rect x="69" y="499" width="1" height="62" fill="#000"/>
<rect x="67" y="509" width="5" height="7" fill="#000"/>
<rect x="68" y="510" width="3" height="5" fill="#fff"/>
<rect x="77" y="444" width="1" height="107" fill="#000"/>
<rect x="75" y="452" width="5" height="58" fill="#000"/>
<rect x="76" y="453" width="3" height="56" fill="#fff"/>
<rect x="85" y="419" width="1" height="71" fill="#000"/>
<rect x="83" y="422" width="5" height="31" fill="#000"/>
<rect x="84" y="423" width="3" height="29" fill="#fff"/>
<rect x="93" y="389" width="1" height="43" fill="#000"/>
<rect x="91" y="396" width="5" height="20" fill="#000"/>
<rect x="92" y="397" width="3" height="18" fill="#fff"/>
<rect x="101" y="351" width="1" height="49" fill="#000"/>
<rect x="99" y="378" width="5" height="18" fill="#000"/>
<rect x="100" y="379" width="3" height="16" fill="#fff"/>
<rect x="109" y="337" width="1" height="58" fill="#000"/>
<rect x="107" y="358" width="5" height="21" fill="#000"/>
<rect x="108" y="359" width="3" height="19" fill="#fff"/>
<rect x="117" y="344" width="1" height="53" fill="#000"/>
<rect x="115" y="358" width="5" height="27" fill="#000"/>
<rect x="125" y="371" width="1" height="49" fill="#000"/>
<rect x="123" y="384" width="5" height="11" fill="#000"/>
<rect x="133" y="347" width="1" height="57" fill="#000"/>
<rect x="131" y="378" width="5" height="25" fill="#000"/>
<rect x="132" y="379" width="3" height="23" fill="#fff"/>
<rect x="141" y="361" width="1" height="47" fill="#000"/>
<rect x="139" y="372" width="5" height="7" fill="#000"/>
<rect x="140" y="373" width="3" height="5" fill="#fff"/>
<rect x="149" y="337" width="1" height="109" fill="#000"/>
<rect x="147" y="373" width="5" height="67" fill="#000"/>
<rect x="157" y="430" width="1" height="37" fill="#000"/>
<rect x="155" y="438" width="5" height="20" fill="#000"/>
<rect x="165" y="417" width="1" height="68" fill="#000"/>
<rect x="163" y="448" width="5" height="10" fill="#000"/>
<rect x="164" y="449" width="3" height="8" fill="#fff"/>
<rect x="173" y="411" width="1" height="42" fill="#000"/>
<rect x="171" y="429" width="5" height="19" fill="#000"/>
<rect x="172" y="430" width="3" height="17" fill="#fff"/>
<rect x="181" y="422" width="1" height="40" fill="#000"/>
<rect x="179" y="429" width="5" height="16" fill="#000"/>
<rect x="189" y="424" width="1" height="18" fill="#000"/>
<rect x="187" y="433" width="5" height="6" fill="#000"/>
<rect x="188" y="434" width="3" height="4" fill="#fff"/>
<rect x="197" y="274" width="1" height="164" fill="#000"/>
<rect x="195" y="387" width="5" height="47" fill="#000"/>
<rect x="196" y="388" width="3" height="45" fill="#fff"/>
<rect x="205" y="331" width="1" height="74" fill="#000"/>
<rect x="203" y="348" width="5" height="34" fill="#000"/>
<rect x="204" y="349" width="3" height="32" fill="#fff"/>
<rect x="213" y="337" width="1" height="43" fill="#000"/>
<rect x="211" y="350" width="5" height="18" fill="#000"/>
<rect x="221" y="367" width="1" height="115" fill="#000"/>
<rect x="219" y="378" width="5" height="71" fill="#000"/>
<rect x="229" y="447" width="1" height="73" fill="#000"/>
<rect x="227" y="447" width="5" height="68" fill="#000"/>
<rect x="237" y="462" width="1" height="65" fill="#000"/>
<rect x="235" y="482" width="5" height="29" fill="#000"/>
<rect x="236" y="483" width="3" height="27" fill="#fff"/>
<rect x="245" y="459" width="1" height="48" fill="#000"/>
<rect x="243" y="482" width="5" height="11" fill="#000"/>
<rect x="253" y="476" width="1" height="65" fill="#000"/>
<rect x="251" y="492" width="5" height="32" fill="#000"/>
<rect x="261" y="478" width="1" height="67" fill="#000"/>
<rect x="259" y="498" width="5" height="27" fill="#000"/>
<rect x="260" y="499" width="3" height="25" fill="#fff"/>
<rect x="269" y="439" width="1" height="88" fill="#000"/>
<rect x="267" y="452" width="5" height="47" fill="#000"/>
<rect x="268" y="453" width="3" height="45" fill="#fff"/>
<rect x="277" y="437" width="1" height="38" fill="#000"/>
<rect x="275" y="442" width="5" height="7" fill="#000"/>
<rect x="285" y="426" width="1" height="41" fill="#000"/>
<rect x="283" y="442" width="5" height="7" fill="#000"/>
<rect x="284" y="443" width="3" height="5" fill="#fff"/>
<rect x="293" y="439" width="1" height="79" fill="#000"/>
<rect x="291" y="442" width="5" height="59" fill="#000"/>
<rect x="301" y="464" width="1" height="54" fill="#000"/>
<rect x="299" y="489" width="5" height="13" fill="#000"/>
<rect x="300" y="490" width="3" height="11" fill="#fff"/>
<rect x="309" y="487" width="1" height="83" fill="#000"/>
<rect x="307" y="489" width="5" height="62" fill="#000"/>
<rect x="317" y="529" width="1" height="48" fill="#000"/>
<rect x="315" y="542" width="5" height="12" fill="#000"/>
<rect x="316" y="543" width="3" height="10" fill="#fff"/>
<rect x="325" y="530" width="1" height="40" fill="#000"/>
<rect x="323" y="535" width="5" height="8" fill="#000"/>
<rect x="324" y="536" width="3" height="6" fill="#fff"/>
<rect x="333" y="517" width="1" height="39" fill="#000"/>
<rect x="331" y="535" width="5" height="12" fill="#000"/>
<rect x="341" y="427" width="1" height="132" fill="#000"/>
<rect x="339" y="429" width="5" height="118" fill="#000"/>
<rect x="340" y="430" width="3" height="116" fill="#fff"/>
<rect x="349" y="394" width="1" height="62" fill="#000"/>
<rect x="347" y="429" width="5" height="18" fill="#000"/>
<rect x="357" y="412" width="1" height="51" fill="#000"/>
<rect x="355" y="443" width="5" height="5" fill="#000"/>
<rect x="365" y="434" width="1" height="49" fill="#000"/>
<rect x="363" y="448" width="5" height="3" fill="#000"/>
<rect x="373" y="437" width="1" height="61" fill="#000"/>
<rect x="371" y="449" width="5" height="8" fill="#000"/>
<rect x="381" y="452" width="1" height="98" fill="#000"/>
<rect x="379" y="456" width="5" height="85" fill="#000"/>
<rect x="389" y="525" width="1" height="74" fill="#000"/>
<rect x="387" y="540" width="5" height="53" fill="#000"/>
<rect x="397" y="553" width="1" height="48" fill="#000"/>
<rect x="395" y="563" width="5" height="34" fill="#000"/>
<rect x="396" y="564" width="3" height="32" fill="#fff"/>
<rect x="405" y="551" width="1" height="34" fill="#000"/>
<rect x="403" y="563" width="5" height="7" fill="#000"/>
<rect x="413" y="539" width="1" height="46" fill="#000"/>
<rect x="411" y="557" width="5" height="13" fill="#000"/>
<rect x="412" y="558" width="3" height="11" fill="#fff"/>
<rect x="421" y="489" width="1" height="108" fill="#000"/>
<rect x="419" y="513" width="5" height="45" fill="#000"/>
<rect x="420" y="514" width="3" height="43" fill="#fff"/>
<rect x="429" y="469" width="1" height="73" fill="#000"/>
<rect x="427" y="475" width="5" height="38" fill="#000"/>
<rect x="428" y="476" width="3" height="36" fill="#fff"/>
<rect x="437" y="463" width="1" height="29" fill="#000"/>
<rect x="435" y="470" width="5" height="22" fill="#000"/>
<rect x="436" y="471" width="3" height="20" fill="#fff"/>
<rect x="445" y="440" width="1" height="42" fill="#000"/>
<rect x="443" y="467" width="5" height="9" fill="#000"/>
<rect x="453" y="463" width="1" height="72" fill="#000"/>
<rect x="451" y="475" width="5" height="36" fill="#000"/>
<rect x="461" y="434" width="1" height="83" fill="#000"/>
<rect x="459" y="442" width="5" height="69" fill="#000"/>
<rect x="460" y="443" width="3" height="67" fill="#fff"/>
<rect x="469" y="415" width="1" height="33" fill="#000"/>
<rect x="467" y="432" width="5" height="11" fill="#000"/>
<rect x="468" y="433" width="3" height="9" fill="#fff"/>
<rect x="477" y="407" width="1" height="26" fill="#000"/>
<rect x="475" y="418" width="5" height="4" fill="#000"/>
<rect x="485" y="370" width="1" height="61" fill="#000"/>
<rect x="483" y="380" width="5" height="41" fill="#000"/>
<rect x="484" y="381" width="3" height="39" fill="#fff"/>
<rect x="493" y="368" width="1" height="39" fill="#000"/>
<rect x="491" y="380" width="5" height="21" fill="#000"/>
<rect x="501" y="375" width="1" height="63" fill="#000"/>
<rect x="499" y="400" width="5" height="13" fill="#000"/>
<rect x="509" y="380" width="1" height="46" fill="#000"/>
<rect x="507" y="396" width="5" height="17" fill="#000"/>
<rect x="508" y="397" width="3" height="15" fill="#fff"/>
<rect x="517" y="370" width="1" height="49" fill="#000"/>
<rect x="515" y="399" width="5" height="1" fill="#000"/>
<rect x="525" y="374" width="1" height="42" fill="#000"/>
<rect x="523" y="391" width="5" height="9" fill="#000"/>
<rect x="524" y="392" width="3" height="7" fill="#fff"/>
<rect x="533" y="381" width="1" height="76" fill="#000"/>
<rect x="531" y="392" width="5" height="46" fill="#000"/>
<rect x="541" y="405" width="1" height="68" fill="#000"/>
<rect x="539" y="418" width="5" height="20" fill="#000"/>
<rect x="540" y="419" width="3" height="18" fill="#fff"/>
<rect x="549" y="329" width="1" height="103" fill="#000"/>
<rect x="547" y="346" width="5" height="73" fill="#000"/>
<rect x="548" y="347" width="3" height="71" fill="#fff"/>
<rect x="557" y="353" width="1" height="53" fill="#000"/>
<rect x="555" y="378" width="5" height="22" fill="#000"/>
<rect x="565" y="361" width="1" height="49" fill="#000"/>
<rect x="563" y="392" width="5" height="7" fill="#000"/>
<rect x="564" y="393" width="3" height="5" fill="#fff"/>
<rect x="573" y="387" width="1" height="23" fill="#000"/>
<rect x="571" y="391" width="5" height="9" fill="#000"/>
<rect x="581" y="290" width="1" height="120" fill="#000"/>
<rect x="579" y="300" width="5" height="101" fill="#000"/>
<rect x="580" y="301" width="3" height="99" fill="#fff"/>
<rect x="589" y="258" width="1" height="50" fill="#000"/>
<rect x="587" y="289" width="5" height="12" fill="#000"/>
<rect x="588" y="290" width="3" height="10" fill="#fff"/>
<rect x="597" y="270" width="1" height="31" fill="#000"/>
<rect x="595" y="285" width="5" height="7" fill="#000"/>
<rect x="596" y="286" width="3" height="5" fill="#fff"/>
<rect x="605" y="285" width="1" height="36" fill="#000"/>
<rect x="603" y="286" width="5" height="16" fill="#000"/>
<rect x="613" y="257" width="1" height="57" fill="#000"/>
<rect x="611" y="267" width="5" height="35" fill="#000"/>
<rect x="612" y="268" width="3" height="33" fill="#fff"/>
<rect x="621" y="216" width="1" height="96" fill="#000"/>
<rect x="619" y="266" width="5" height="26" fill="#000"/>
<rect x="629" y="239" width="1" height="72" fill="#000"/>
<rect x="627" y="258" width="5" height="34" fill="#000"/>
<rect x="628" y="259" width="3" height="32" fill="#fff"/>
<rect x="637" y="231" width="1" height="56" fill="#000"/>
<rect x="635" y="252" width="5" height="8" fill="#000"/>
<rect x="636" y="253" width="3" height="6" fill="#fff"/>
<rect x="645" y="235" width="1" height="50" fill="#000"/>
<rect x="643" y="242" width="5" height="11" fill="#000"/>
<rect x="644" y="243" width="3" height="9" fill="#fff"/>
<rect x="653" y="242" width="1" height="98" fill="#000"/>
<rect x="651" y="242" width="5" height="93" fill="#000"/>
<rect x="661" y="312" width="1" height="76" fill="#000"/>
<rect x="659" y="333" width="5" height="32" fill="#000"/>
<rect x="669" y="338" width="1" height="38" fill="#000"/>
<rect x="667" y="352" width="5" height="13" fill="#000"/>
<rect x="668" y="353" width="3" height="11" fill="#fff"/>
<rect x="677" y="287" width="1" height="92" fill="#000"/>
<rect x="675" y="317" width="5" height="31" fill="#000"/>
<rect x="676" y="318" width="3" height="29" fill="#fff"/>
<rect x="685" y="310" width="1" height="78" fill="#000"/>
<rect x="683" y="317" width="5" height="11" fill="#000"/>
<rect x="693" y="326" width="1" height="40" fill="#000"/>
<rect x="691" y="326" width="5" height="33" fill="#000"/>
<rect x="701" y="349" width="1" height="56" fill="#000"/>
<rect x="699" y="359" width="5" height="35" fill="#000"/>
<rect x="709" y="367" width="1" height="55" fill="#000"/>
<rect x="707" y="385" width="5" height="9" fill="#000"/>
<rect x="708" y="386" width="3" height="7" fill="#fff"/>
<rect x="717" y="373" width="1" height="9" fill="#000"/>
<rect x="715" y="373" width="5" height="5" fill="#000"/>
<rect x="725" y="341" width="1" height="69" fill="#000"/>
<rect x="723" y="372" width="5" height="6" fill="#000"/>
<rect x="724" y="373" width="3" height="4" fill="#fff"/>
<rect x="733" y="334" width="1" height="42" fill="#000"/>
<rect x="731" y="353" width="5" height="20" fill="#000"/>
<rect x="732" y="354" width="3" height="18" fill="#fff"/>
<rect x="741" y="331" width="1" height="54" fill="#000"/>
<rect x="739" y="353" width="5" height="22" fill="#000"/>
<rect x="749" y="342" width="1" height="86" fill="#000"/>
<rect x="747" y="373" width="5" height="38" fill="#000"/>
<rect x="757" y="401" width="1" height="46" fill="#000"/>
<rect x="755" y="409" width="5" height="16" fill="#000"/>
<rect x="765" y="387" width="1" height="45" fill="#000"/>
<rect x="763" y="393" width="5" height="36" fill="#000"/>
<rect x="764" y="394" width="3" height="34" fill="#fff"/>
<rect x="773" y="337" width="1" height="60" fill="#000"/>
<rect x="771" y="349" width="5" height="45" fill="#000"/>
<rect x="772" y="350" width="3" height="43" fill="#fff"/>
<rect x="781" y="298" width="1" height="59" fill="#000"/>
<rect x="779" y="304" width="5" height="47" fill="#000"/>
<rect x="780" y="305" width="3" height="45" fill="#fff"/>
<rect x="789" y="269" width="1" height="51" fill="#000"/>
<rect x="787" y="280" width="5" height="25" fill="#000"/>
<rect x="788" y="281" width="3" height="23" fill="#fff"/>
<rect x="797" y="264" width="1" height="35" fill="#000"/>
<rect x="795" y="280" width="5" height="1" fill="#000"/>
<rect x="805" y="297" width="1" height="44" fill="#000"/>
<rect x="803" y="313" width="5" height="19" fill="#000"/>
<rect x="813" y="320" width="1" height="37" fill="#000"/>
<rect x="811" y="331" width="5" height="6" fill="#000"/>
<rect x="821" y="307" width="1" height="38" fill="#000"/>
<rect x="819" y="335" width="5" height="3" fill="#000"/>
<rect x="829" y="296" width="1" height="44" fill="#000"/>
<rect x="827" y="335" width="5" height="3" fill="#000"/>
<rect x="837" y="329" width="1" height="15" fill="#000"/>
<rect x="835" y="337" width="5" height="1" fill="#000"/>
<rect x="845" y="323" width="1" height="35" fill="#000"/>
<rect x="843" y="338" width="5" height="16" fill="#000"/>
<rect x="853" y="327" width="1" height="33" fill="#000"/>
<rect x="851" y="343" width="5" height="11" fill="#000"/>
<rect x="852" y="344" width="3" height="9" fill="#fff"/>
<rect x="861" y="304" width="1" height="44" fill="#000"/>
<rect x="859" y="334" width="5" height="10" fill="#000"/>
<rect x="860" y="335" width="3" height="8" fill="#fff"/>
<rect x="869" y="313" width="1" height="41" fill="#000"/>
<rect x="867" y="322" width="5" height="13" fill="#000"/>
<rect x="868" y="323" width="3" height="11" fill="#fff"/>
<rect x="877" y="309" width="1" height="19" fill="#000"/>
<rect x="875" y="320" width="5" height="3" fill="#000"/>
<rect x="885" y="285" width="1" height="52" fill="#000"/>
<rect x="883" y="307" width="5" height="6" fill="#000"/>
<rect x="884" y="308" width="3" height="4" fill="#fff"/>
<rect x="893" y="284" width="1" height="59" fill="#000"/>
<rect x="891" y="307" width="5" height="32" fill="#000"/>
<rect x="901" y="286" width="1" height="80" fill="#000"/>
<rect x="899" y="294" width="5" height="45" fill="#000"/>
<rect x="900" y="295" width="3" height="43" fill="#fff"/>
<rect x="909" y="277" width="1" height="21" fill="#000"/>
<rect x="907" y="293" width="5" height="3" fill="#000"/>
<rect x="908" y="294" width="3" height="1" fill="#fff"/>
<rect x="917" y="283" width="1" height="55" fill="#000"/>
<rect x="915" y="292" width="5" height="1" fill="#000"/>
<rect x="925" y="275" width="1" height="22" fill="#000"/>
<rect x="923" y="281" width="5" height="8" fill="#000"/>
<rect x="933" y="228" width="1" height="63" fill="#000"/>
<rect x="931" y="247" width="5" height="42" fill="#000"/>
<rect x="932" y="248" width="3" height="40" fill="#fff"/>
<rect x="941" y="238" width="1" height="24" fill="#000"/>
<rect x="939" y="247" width="5" height="15" fill="#000"/>
<rect x="949" y="195" width="1" height="127" fill="#000"/>
<rect x="947" y="261" width="5" height="56" fill="#000"/>
<rect x="957" y="312" width="1" height="79" fill="#000"/>
<rect x="955" y="316" width="5" height="66" fill="#000"/>
<rect x="965" y="367" width="1" height="21" fill="#000"/>
<rect x="963" y="380" width="5" height="6" fill="#000"/>
<rect x="964" y="381" width="3" height="4" fill="#fff"/>
<rect x="973" y="369" width="1" height="66" fill="#000"/>
<rect x="971" y="381" width="5" height="43" fill="#000"/>
<rect x="981" y="401" width="1" height="27" fill="#000"/>
<rect x="979" y="414" width="5" height="10" fill="#000"/>
<rect x="980" y="415" width="3" height="8" fill="#fff"/>
<rect x="989" y="400" width="1" height="67" fill="#000"/>
<rect x="987" y="414" width="5" height="6" fill="#000"/>
<rect x="997" y="404" width="1" height="34" fill="#000"/>
<rect x="995" y="418" width="5" height="14" fill="#000"/>
<rect x="1005" y="397" width="1" height="35" fill="#000"/>
<rect x="1003" y="419" width="5" height="13" fill="#000"/>
<rect x="1004" y="420" width="3" height="11" fill="#fff"/>
<rect x="1013" y="419" width="1" height="24" fill="#000"/>
<rect x="1011" y="419" width="5" height="7" fill="#000"/>
<rect x="1021" y="407" width="1" height="70" fill="#000"/>
<rect x="1019" y="425" width="5" height="12" fill="#000"/>
<rect x="1029" y="435" width="1" height="33" fill="#000"/>
<rect x="1027" y="436" width="5" height="25" fill="#000"/>
<rect x="1037" y="457" width="1" height="35" fill="#000"/>
<rect x="1035" y="460" width="5" height="22" fill="#000"/>
</g>
<path d="M1069.5,511.3 L1078,519.5 L1073.5,519.5 L1073.5,529.5 L1065.5,529.5 L1065.5,519.5 L1060.8,519.5 Z" fill="#fff" stroke="#ff0000" stroke-width="1.25"/>
<path d="M1050,110 L1060,110 L1055,115.5 Z" fill="#708098"/>
<rect x="16" y="112" width="224" height="11" fill="#fff"/>
<path d="M16.5,115.5 L23.5,115.5 L20,119.5 Z" fill="#000"/>
<text x="28.5" y="120.8" font-size="9.5" fill="#000" textLength="210.5" lengthAdjust="spacingAndGlyphs" stroke="#000" stroke-width="0.18">EURUSD,Daily  1.36551 1.36584 1.36154 1.36288</text>
<g shape-rendering="crispEdges">
<rect x="12" y="109" width="1306" height="1" fill="#000"/>
<rect x="12" y="675" width="1306" height="1" fill="#000"/>
<rect x="12" y="109" width="1" height="567" fill="#000"/>
<rect x="1317" y="109" width="1" height="567" fill="#000"/>
<rect x="1318" y="111" width="3" height="1" fill="#000"/>
<rect x="1318" y="144" width="3" height="1" fill="#000"/>
<rect x="1318" y="177" width="3" height="1" fill="#000"/>
<rect x="1318" y="210" width="3" height="1" fill="#000"/>
<rect x="1318" y="243" width="3" height="1" fill="#000"/>
<rect x="1318" y="276" width="3" height="1" fill="#000"/>
<rect x="1318" y="309" width="3" height="1" fill="#000"/>
<rect x="1318" y="342" width="3" height="1" fill="#000"/>
<rect x="1318" y="375" width="3" height="1" fill="#000"/>
<rect x="1318" y="408" width="3" height="1" fill="#000"/>
<rect x="1318" y="441" width="3" height="1" fill="#000"/>
<rect x="1318" y="474" width="3" height="1" fill="#000"/>
<rect x="1318" y="507" width="3" height="1" fill="#000"/>
<rect x="1318" y="540" width="3" height="1" fill="#000"/>
<rect x="1318" y="573" width="3" height="1" fill="#000"/>
<rect x="1318" y="606" width="3" height="1" fill="#000"/>
<rect x="1318" y="639" width="3" height="1" fill="#000"/>
<rect x="1318" y="672" width="3" height="1" fill="#000"/>
<rect x="13" y="676" width="1" height="3" fill="#000"/>
<rect x="77" y="676" width="1" height="3" fill="#000"/>
<rect x="141" y="676" width="1" height="3" fill="#000"/>
<rect x="205" y="676" width="1" height="3" fill="#000"/>
<rect x="269" y="676" width="1" height="3" fill="#000"/>
<rect x="333" y="676" width="1" height="3" fill="#000"/>
<rect x="397" y="676" width="1" height="3" fill="#000"/>
<rect x="461" y="676" width="1" height="3" fill="#000"/>
<rect x="525" y="676" width="1" height="3" fill="#000"/>
<rect x="589" y="676" width="1" height="3" fill="#000"/>
<rect x="653" y="676" width="1" height="3" fill="#000"/>
<rect x="717" y="676" width="1" height="3" fill="#000"/>
<rect x="781" y="676" width="1" height="3" fill="#000"/>
<rect x="845" y="676" width="1" height="3" fill="#000"/>
<rect x="909" y="676" width="1" height="3" fill="#000"/>
<rect x="973" y="676" width="1" height="3" fill="#000"/>
<rect x="1037" y="676" width="1" height="3" fill="#000"/>
</g>
<text x="1324" y="114" font-size="9.5" fill="#000" textLength="31.5" lengthAdjust="spacingAndGlyphs" stroke="#000" stroke-width="0.18">1.41000</text>
<text x="1324" y="147" font-size="9.5" fill="#000" textLength="31.5" lengthAdjust="spacingAndGlyphs" stroke="#000" stroke-width="0.18">1.40580</text>
<text x="1324" y="180" font-size="9.5" fill="#000" textLength="31.5" lengthAdjust="spacingAndGlyphs" stroke="#000" stroke-width="0.18">1.40160</text>
<text x="1324" y="213" font-size="9.5" fill="#000" textLength="31.5" lengthAdjust="spacingAndGlyphs" stroke="#000" stroke-width="0.18">1.39740</text>
<text x="1324" y="246" font-size="9.5" fill="#000" textLength="31.5" lengthAdjust="spacingAndGlyphs" stroke="#000" stroke-width="0.18">1.39320</text>
<text x="1324" y="279" font-size="9.5" fill="#000" textLength="31.5" lengthAdjust="spacingAndGlyphs" stroke="#000" stroke-width="0.18">1.38900</text>
<text x="1324" y="312" font-size="9.5" fill="#000" textLength="31.5" lengthAdjust="spacingAndGlyphs" stroke="#000" stroke-width="0.18">1.38480</text>
<text x="1324" y="345" font-size="9.5" fill="#000" textLength="31.5" lengthAdjust="spacingAndGlyphs" stroke="#000" stroke-width="0.18">1.38060</text>
<text x="1324" y="378" font-size="9.5" fill="#000" textLength="31.5" lengthAdjust="spacingAndGlyphs" stroke="#000" stroke-width="0.18">1.37640</text>
<text x="1324" y="411" font-size="9.5" fill="#000" textLength="31.5" lengthAdjust="spacingAndGlyphs" stroke="#000" stroke-width="0.18">1.37220</text>
<text x="1324" y="444" font-size="9.5" fill="#000" textLength="31.5" lengthAdjust="spacingAndGlyphs" stroke="#000" stroke-width="0.18">1.36800</text>
<text x="1324" y="477" font-size="9.5" fill="#000" textLength="31.5" lengthAdjust="spacingAndGlyphs" stroke="#000" stroke-width="0.18">1.36370</text>
<text x="1324" y="510" font-size="9.5" fill="#000" textLength="31.5" lengthAdjust="spacingAndGlyphs" stroke="#000" stroke-width="0.18">1.35950</text>
<text x="1324" y="543" font-size="9.5" fill="#000" textLength="31.5" lengthAdjust="spacingAndGlyphs" stroke="#000" stroke-width="0.18">1.35530</text>
<text x="1324" y="576" font-size="9.5" fill="#000" textLength="31.5" lengthAdjust="spacingAndGlyphs" stroke="#000" stroke-width="0.18">1.35110</text>
<text x="1324" y="609" font-size="9.5" fill="#000" textLength="31.5" lengthAdjust="spacingAndGlyphs" stroke="#000" stroke-width="0.18">1.34690</text>
<text x="1324" y="642" font-size="9.5" fill="#000" textLength="31.5" lengthAdjust="spacingAndGlyphs" stroke="#000" stroke-width="0.18">1.34270</text>
<text x="1324" y="675" font-size="9.5" fill="#000" textLength="31.5" lengthAdjust="spacingAndGlyphs" stroke="#000" stroke-width="0.18">1.33850</text>
<text x="12.2" y="688" font-size="9.5" fill="#000" textLength="54" lengthAdjust="spacingAndGlyphs" stroke="#000" stroke-width="0.18">25 Nov 2013</text>
<text x="76.2" y="688" font-size="9.5" fill="#000" textLength="49" lengthAdjust="spacingAndGlyphs" stroke="#000" stroke-width="0.18">5 Dec 2013</text>
<text x="140.2" y="688" font-size="9.5" fill="#000" textLength="54" lengthAdjust="spacingAndGlyphs" stroke="#000" stroke-width="0.18">17 Dec 2013</text>
<text x="204.2" y="688" font-size="9.5" fill="#000" textLength="54" lengthAdjust="spacingAndGlyphs" stroke="#000" stroke-width="0.18">30 Dec 2013</text>
<text x="268.2" y="688" font-size="9.5" fill="#000" textLength="54" lengthAdjust="spacingAndGlyphs" stroke="#000" stroke-width="0.18">10 Jan 2014</text>
<text x="332.2" y="688" font-size="9.5" fill="#000" textLength="54" lengthAdjust="spacingAndGlyphs" stroke="#000" stroke-width="0.18">22 Jan 2014</text>
<text x="396.2" y="688" font-size="9.5" fill="#000" textLength="49" lengthAdjust="spacingAndGlyphs" stroke="#000" stroke-width="0.18">3 Feb 2014</text>
<text x="460.2" y="688" font-size="9.5" fill="#000" textLength="54" lengthAdjust="spacingAndGlyphs" stroke="#000" stroke-width="0.18">13 Feb 2014</text>
<text x="524.2" y="688" font-size="9.5" fill="#000" textLength="54" lengthAdjust="spacingAndGlyphs" stroke="#000" stroke-width="0.18">25 Feb 2014</text>
<text x="588.2" y="688" font-size="9.5" fill="#000" textLength="49" lengthAdjust="spacingAndGlyphs" stroke="#000" stroke-width="0.18">7 Mar 2014</text>
<text x="652.2" y="688" font-size="9.5" fill="#000" textLength="54" lengthAdjust="spacingAndGlyphs" stroke="#000" stroke-width="0.18">19 Mar 2014</text>
<text x="716.2" y="688" font-size="9.5" fill="#000" textLength="54" lengthAdjust="spacingAndGlyphs" stroke="#000" stroke-width="0.18">30 Mar 2014</text>
<text x="780.2" y="688" font-size="9.5" fill="#000" textLength="49" lengthAdjust="spacingAndGlyphs" stroke="#000" stroke-width="0.18">9 Apr 2014</text>
<text x="844.2" y="688" font-size="9.5" fill="#000" textLength="54" lengthAdjust="spacingAndGlyphs" stroke="#000" stroke-width="0.18">21 Apr 2014</text>
<text x="908.2" y="688" font-size="9.5" fill="#000" textLength="49" lengthAdjust="spacingAndGlyphs" stroke="#000" stroke-width="0.18">1 May 2014</text>
<text x="972.2" y="688" font-size="9.5" fill="#000" textLength="54" lengthAdjust="spacingAndGlyphs" stroke="#000" stroke-width="0.18">13 May 2014</text>
<text x="1036.2" y="688" font-size="9.5" fill="#000" textLength="54" lengthAdjust="spacingAndGlyphs" stroke="#000" stroke-width="0.18">23 May 2014</text>
<rect x="1319" y="362" width="41" height="11" fill="#0000cd"/>
<text x="1324" y="370" font-size="9.5" fill="#fff" textLength="31.5" lengthAdjust="spacingAndGlyphs" stroke="#fff" stroke-width="0.18">1.37745</text>
<rect x="1319" y="443" width="41" height="11" fill="#0000cd"/>
<text x="1324" y="451" font-size="9.5" fill="#fff" textLength="31.5" lengthAdjust="spacingAndGlyphs" stroke="#fff" stroke-width="0.18">1.36710</text>
<rect x="1319" y="476" width="41" height="11" fill="#000"/>
<text x="1324" y="484" font-size="9.5" fill="#fff" textLength="31.5" lengthAdjust="spacingAndGlyphs" stroke="#fff" stroke-width="0.18">1.36288</text>
<rect x="1319" y="596" width="41" height="11" fill="#0000cd"/>
<text x="1324" y="604" font-size="9.5" fill="#fff" textLength="31.5" lengthAdjust="spacingAndGlyphs" stroke="#fff" stroke-width="0.18">1.34762</text>

</svg>
</body></html>
